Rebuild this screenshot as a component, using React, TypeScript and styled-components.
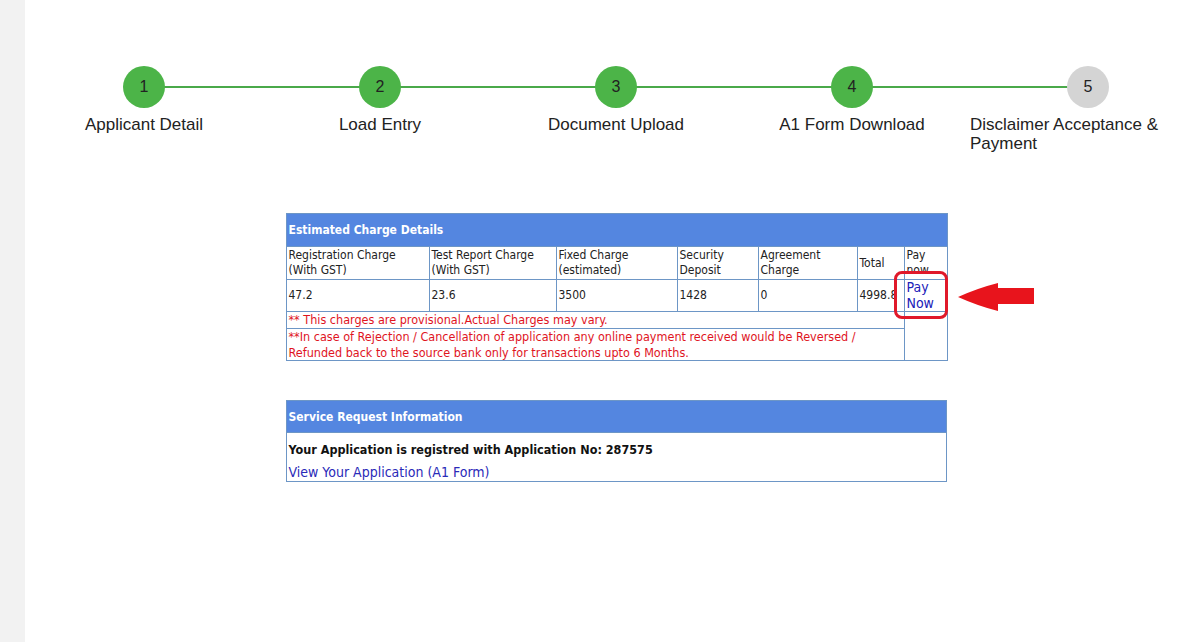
import React from "react";
import styled, { createGlobalStyle } from "styled-components";

const Global = createGlobalStyle`
  html, body { margin: 0; padding: 0; overflow: hidden; background: #ffffff; }
  #root { height: 642px; }
`;

const Page = styled.div`
  display: flex;
  height: 642px;
  width: 1200px;
`;

const SideStrip = styled.div`
  width: 25px;
  flex: none;
  background: #f2f2f2;
`;

const Main = styled.div`
  flex: 1;
  background: #ffffff;
  padding-left: 1px;
  padding-top: 66px;
  overflow: hidden;
`;

const Content = styled.div`
  width: 1180px;
`;

const Steps = styled.div`
  display: grid;
  grid-template-columns: repeat(5, 236px);
`;

const Step = styled.div<{ $last?: boolean }>`
  position: relative;
  text-align: center;
  &::after {
    content: "";
    display: ${(p) => (p.$last ? "none" : "block")};
    position: absolute;
    top: 20px;
    left: 50%;
    width: 236px;
    height: 2px;
    background: #4aa94a;
    z-index: 0;
  }
`;

const Circle = styled.div<{ $done: boolean }>`
  position: relative;
  z-index: 1;
  width: 42px;
  height: 42px;
  margin: 0 auto;
  border-radius: 50%;
  background: ${(p) => (p.$done ? "#4cb448" : "#d4d4d4")};
  color: #222;
  font-family: "Liberation Sans", Arial, sans-serif;
  font-size: 16px;
  display: flex;
  align-items: center;
  justify-content: center;
`;

const StepLabel = styled.div`
  display: inline-block;
  text-align: left;
  margin-top: 7px;
  font-family: "Liberation Sans", Arial, sans-serif;
  font-size: 17px;
  line-height: 19px;
  color: #222;
`;

const Panel = styled.div<{ $top: number }>`
  width: 661px;
  margin: ${(p) => p.$top}px auto 0;
`;

const Table = styled.table`
  border-collapse: collapse;
  width: 661px;
  table-layout: fixed;
  font-family: Tahoma, "DejaVu Sans Condensed", "DejaVu Sans", sans-serif;
  font-size: 12px;
  color: #222;
`;

const HeadCell = styled.th<{ $h: number }>`
  background: #5486e0;
  color: #ffffff;
  font-weight: bold;
  text-align: left;
  height: ${(p) => p.$h}px;
  padding: 0 2px;
  border: 1px solid #6d96c6;
  font-size: 12px;
`;

const Cell = styled.td`
  border: 1px solid #6d96c6;
  padding: 1px 2px;
  line-height: 15px;
  vertical-align: middle;
`;

const PayCell = styled.td`
  position: relative;
  border: 1px solid #6d96c6;
  padding: 0 2px;
  vertical-align: middle;
`;

const Note = styled.td<{ $lh: number }>`
  border: 1px solid #6d96c6;
  padding: 0 2px;
  font-size: 12.5px;
  line-height: ${(p) => p.$lh}px;
  color: #e0141e;
`;

const EmptyCell = styled.td`
  border: 1px solid #6d96c6;
`;

const PayLink = styled.a`
  color: #2020b8;
  font-size: 14px;
  line-height: 15.5px;
  text-decoration: none;
  display: block;
`;

const Highlight = styled.div`
  position: absolute;
  left: -11px;
  top: -9px;
  width: 48px;
  height: 42px;
  border: 3px solid #e0192a;
  border-radius: 8px;
  pointer-events: none;
`;

const Arrow = styled.svg`
  position: absolute;
  left: 53px;
  top: 2px;
`;

const InfoBody = styled.td`
  border: 1px solid #6d96c6;
  padding: 8px 2px 0;
`;

const InfoLine = styled.div`
  font-weight: bold;
  color: #111;
  font-size: 12.5px;
  line-height: 18px;
`;

const InfoLink = styled.a`
  display: block;
  padding-top: 4px;
  color: #2a2ab8;
  font-size: 14px;
  line-height: 18px;
  text-decoration: none;
`;

const steps = [
  { n: 1, label: "Applicant Detail", done: true },
  { n: 2, label: "Load Entry", done: true },
  { n: 3, label: "Document Upload", done: true },
  { n: 4, label: "A1 Form Download", done: true },
  { n: 5, label: "Disclaimer Acceptance & Payment", done: false },
];

const colWidths = [143, 127, 121, 81, 99, 47, 43];

export default function App() {
  return (
    <>
      <Global />
      <Page>
        <SideStrip />
        <Main>
          <Content>
            <Steps>
              {steps.map((s, i) => (
                <Step key={s.n} $last={i === steps.length - 1}>
                  <Circle $done={s.done}>{s.n}</Circle>
                  <StepLabel>{s.label}</StepLabel>
                </Step>
              ))}
            </Steps>

            <Panel $top={60}>
              <Table>
                <colgroup>
                  {colWidths.map((w, i) => (
                    <col key={i} style={{ width: w }} />
                  ))}
                </colgroup>
                <thead>
                  <tr>
                    <HeadCell $h={32} colSpan={7}>
                      Estimated Charge Details
                    </HeadCell>
                  </tr>
                </thead>
                <tbody>
                  <tr>
                    <Cell>Registration Charge (With GST)</Cell>
                    <Cell>Test Report Charge (With GST)</Cell>
                    <Cell>Fixed Charge (estimated)</Cell>
                    <Cell>Security Deposit</Cell>
                    <Cell>Agreement Charge</Cell>
                    <Cell>Total</Cell>
                    <Cell>Pay now</Cell>
                  </tr>
                  <tr>
                    <Cell>47.2</Cell>
                    <Cell>23.6</Cell>
                    <Cell>3500</Cell>
                    <Cell>1428</Cell>
                    <Cell>0</Cell>
                    <Cell>4998.8</Cell>
                    <PayCell>
                      <PayLink href="#">Pay Now</PayLink>
                      <Highlight />
                      <Arrow width="76" height="30" viewBox="0 0 76 30">
                        <path
                          d="M0 15 Q20 6 40 1 L40 6 L76 6 L76 22 L40 22 L40 29 Q20 24 0 15 Z"
                          fill="#e8141c"
                        />
                      </Arrow>
                    </PayCell>
                  </tr>
                  <tr>
                    <Note $lh={16} colSpan={6}>
                      ** This charges are provisional.Actual Charges may vary.
                    </Note>
                    <EmptyCell rowSpan={2} />
                  </tr>
                  <tr>
                    <Note $lh={15.5} colSpan={6}>
                      **In case of Rejection / Cancellation of application any online payment
                      received would be Reversed / Refunded back to the source bank only for
                      transactions upto 6 Months.
                    </Note>
                  </tr>
                </tbody>
              </Table>
            </Panel>

            <Panel $top={39}>
              <Table>
                <thead>
                  <tr>
                    <HeadCell $h={31}>Service Request Information</HeadCell>
                  </tr>
                </thead>
                <tbody>
                  <tr>
                    <InfoBody>
                      <InfoLine>Your Application is registred with Application No: 287575</InfoLine>
                      <InfoLink href="#">View Your Application (A1 Form)</InfoLink>
                    </InfoBody>
                  </tr>
                </tbody>
              </Table>
            </Panel>
          </Content>
        </Main>
      </Page>
    </>
  );
}
